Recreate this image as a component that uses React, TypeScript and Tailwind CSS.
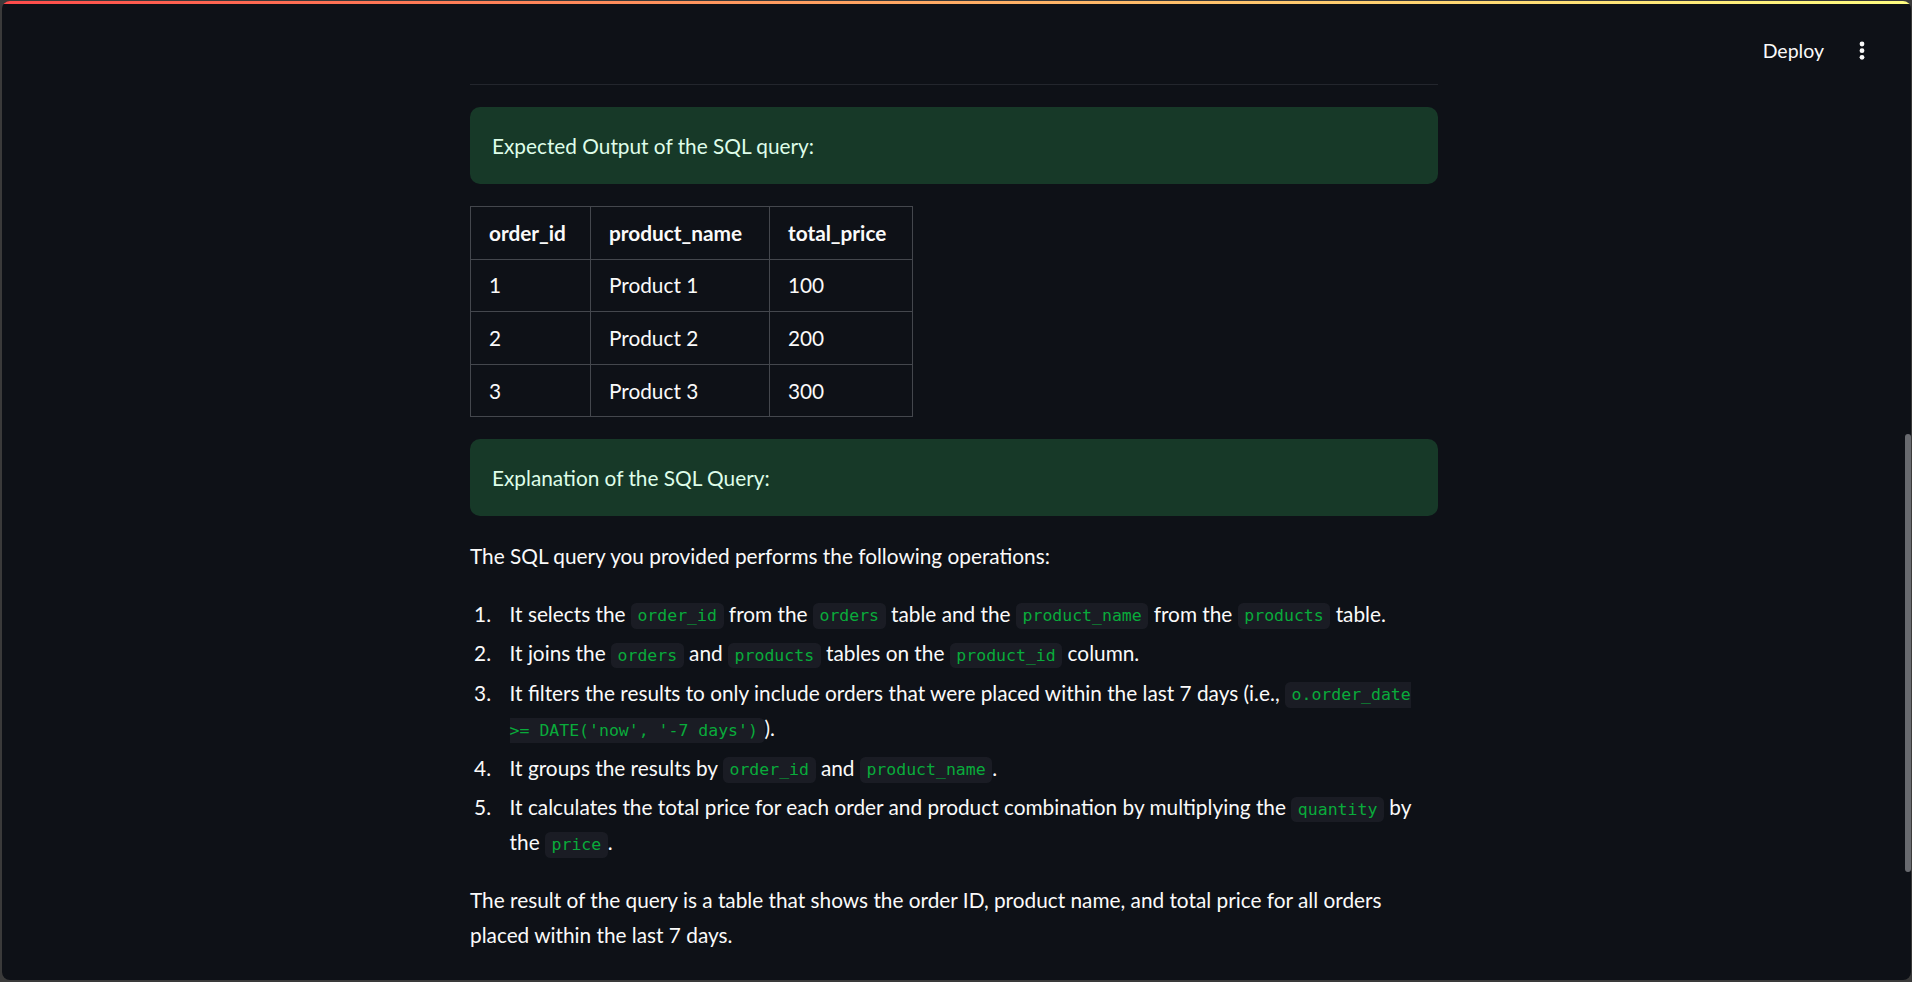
const Code = ({ children }: { children: string }) => (
  <code className="rounded-[5.5px] bg-[#1a1c24] px-[6.6px] py-[3.3px] font-['DejaVu_Sans_Mono',monospace] text-[16.5px] leading-none text-[#09ab3b]">
    {children}
  </code>
);

const rows = [
  { id: "1", name: "Product 1", price: "100" },
  { id: "2", name: "Product 2", price: "200" },
  { id: "3", name: "Product 3", price: "300" },
];

const Alert = ({ text }: { text: string }) => (
  <div className="flex h-[77px] items-center rounded-[10px] bg-[#173928] px-[22px] text-[20.8px] text-[#dffde9]">
    {text}
  </div>
);

const cell = "border border-[#44474d] px-[18px] py-[8.8px] text-left leading-[34px]";

const App = () => {
  return (
    <div className="h-[982px] w-[1912px] bg-[#3a3a3a] pb-[2px] pl-[2px] pr-[1px] pt-[1px] font-['Lato',sans-serif]">
      <div className="relative h-full overflow-hidden rounded-[8px] bg-[#0e1117] text-[#fafafa]">
        <div className="h-[3px] bg-gradient-to-r from-[#ff4b4b] to-[#fffd80]" />

        {/* header, sits over the page */}
        <div className="absolute right-[46px] top-[35px] flex items-center gap-[35px]">
          <span className="text-[19.5px]">Deploy</span>
          <svg width="6" height="20" viewBox="0 0 6 20">
            <circle cx="3" cy="3" r="2.4" fill="#fafafa" />
            <circle cx="3" cy="9.7" r="2.4" fill="#fafafa" />
            <circle cx="3" cy="16.3" r="2.4" fill="#fafafa" />
          </svg>
        </div>

        <main className="ml-[468px] flex w-[968px] flex-col gap-[22px] pt-[80px]">
          <hr className="border-0 border-t border-[#23262d]" />
          <Alert text="Expected Output of the SQL query:" />

          <table className="w-fit border-collapse text-[20.8px]">
            <thead>
              <tr>
                <th className={`${cell} w-[120px] font-bold`}>order_id</th>
                <th className={`${cell} w-[179px] font-bold`}>product_name</th>
                <th className={`${cell} w-[143px] font-bold`}>total_price</th>
              </tr>
            </thead>
            <tbody>
              {rows.map((r) => (
                <tr key={r.id}>
                  <td className={cell}>{r.id}</td>
                  <td className={cell}>{r.name}</td>
                  <td className={cell}>{r.price}</td>
                </tr>
              ))}
            </tbody>
          </table>

          <Alert text="Explanation of the SQL Query:" />

          <div className="text-[20.8px] leading-[35.2px]">
            <p className="mb-[22px]">The SQL query you provided performs the following operations:</p>
            <ol className="mb-[22px] list-decimal">
              <li className="my-[4.4px] ml-[26.4px] pl-[13.2px]">
                It selects the <Code>order_id</Code> from the <Code>orders</Code> table and the{" "}
                <Code>product_name</Code> from the <Code>products</Code> table.
              </li>
              <li className="my-[4.4px] ml-[26.4px] pl-[13.2px]">
                It joins the <Code>orders</Code> and <Code>products</Code> tables on the <Code>product_id</Code>{" "}
                column.
              </li>
              <li className="my-[4.4px] ml-[26.4px] pl-[13.2px]">
                It filters the results to only include orders that were placed within the last 7 days (i.e.,{" "}
                <Code>o.order_date &gt;= DATE('now', '-7 days')</Code>).
              </li>
              <li className="my-[4.4px] ml-[26.4px] pl-[13.2px]">
                It groups the results by <Code>order_id</Code> and <Code>product_name</Code>.
              </li>
              <li className="my-[4.4px] ml-[26.4px] pl-[13.2px]">
                It calculates the total price for each order and product combination by multiplying the{" "}
                <Code>quantity</Code> by the <Code>price</Code>.
              </li>
            </ol>
            <p>
              The result of the query is a table that shows the order ID, product name, and total price for all orders
              placed within the last 7 days.
            </p>
          </div>
        </main>

        <div className="absolute right-0 top-[433px] h-[438px] w-[6px] rounded-full bg-[#686a6f]" />
      </div>
    </div>
  );
};

export default App;
